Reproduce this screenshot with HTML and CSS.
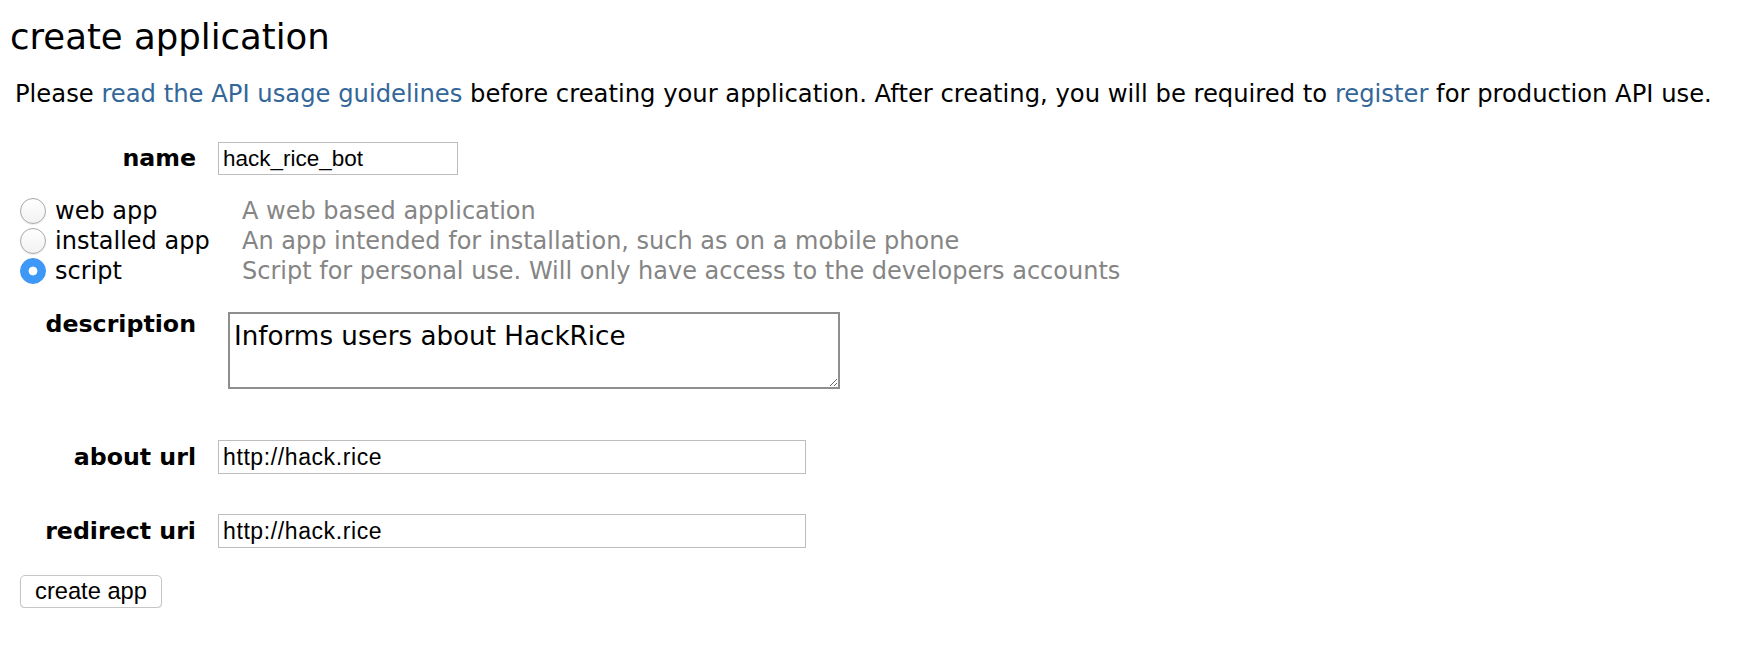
FILE: index.html
```html
<!DOCTYPE html>
<html lang="en">
<head>
<meta charset="utf-8">
<title>create application</title>
<link rel="stylesheet" href="styles.css">
</head>
<body>
<div class="page">
  <h1 class="title">create application</h1>
  <p class="intro">Please <a class="link" href="#">read the API usage guidelines</a> before creating your application. After creating, you will be required to <a class="link" href="#">register</a> for production API use.</p>

  <form class="app-form" onsubmit="return false">
    <div class="field field-name">
      <label class="field-label" for="name">name</label>
      <input class="text-input input-short" id="name" type="text" value="hack_rice_bot">
    </div>

    <div class="app-types">
      <div class="app-type">
        <label class="app-type-choice"><input class="radio" type="radio" name="type"><span>web app</span></label>
        <span class="app-type-desc">A web based application</span>
      </div>
      <div class="app-type">
        <label class="app-type-choice"><input class="radio" type="radio" name="type"><span>installed app</span></label>
        <span class="app-type-desc">An app intended for installation, such as on a mobile phone</span>
      </div>
      <div class="app-type">
        <label class="app-type-choice"><input class="radio" type="radio" name="type" checked><span>script</span></label>
        <span class="app-type-desc">Script for personal use. Will only have access to the developers accounts</span>
      </div>
    </div>

    <div class="field field-desc">
      <label class="field-label" for="desc">description</label>
      <textarea class="desc-input" id="desc">Informs users about HackRice</textarea>
    </div>

    <div class="field field-about">
      <label class="field-label" for="about">about url</label>
      <input class="text-input input-long" id="about" type="text" value="http://hack.rice">
    </div>

    <div class="field field-redirect">
      <label class="field-label" for="redirect">redirect uri</label>
      <input class="text-input input-long" id="redirect" type="text" value="http://hack.rice">
    </div>

    <button class="submit" type="button">create app</button>
  </form>
</div>
</body>
</html>
```

FILE: styles.css
```css
html, body {
  margin: 0;
  padding: 0;
  background: #ffffff;
}

body {
  font-family: "DejaVu Sans", Verdana, sans-serif;
  color: #000000;
}

.page {
  padding: 0 10px;
}

.title {
  margin: 0;
  padding-top: 17px;
  font-size: 35.5px;
  font-weight: normal;
  line-height: 40px;
}

.intro {
  margin: 23px 0 0 5px;
  font-size: 24.25px;
  line-height: 28px;
  white-space: nowrap;
}

.link {
  color: #336699;
  text-decoration: none;
}

.app-form {
  margin: 0;
}

.field {
  display: flex;
  align-items: baseline;
}

.field-label {
  width: 186px;
  margin-right: 22px;
  flex: none;
  text-align: right;
  font-size: 23.7px;
  font-weight: bold;
}

.field-name {
  margin-top: 34px;
}

.text-input {
  box-sizing: border-box;
  height: 34px;
  margin: 0;
  padding: 0 4px;
  border: 1px solid #bdbdbd;
  border-radius: 0;
  background: #ffffff;
  font-family: "Liberation Sans", Arial, sans-serif;
  font-size: 23px;
  color: #000000;
  outline: none;
}

.input-short {
  width: 240px;
  height: 33px;
  font-size: 22.5px;
}

.input-long {
  width: 588px;
  letter-spacing: 0.6px;
}

.app-types {
  margin-top: 21px;
}

.app-type {
  display: flex;
  align-items: center;
  height: 30px;
  font-size: 24px;
  line-height: 30px;
}

.app-type-choice {
  display: flex;
  align-items: center;
  width: 222px;
  margin-left: 10px;
  flex: none;
}

.radio {
  -webkit-appearance: none;
  appearance: none;
  box-sizing: border-box;
  width: 26px;
  height: 26px;
  margin: 0 9px 0 0;
  border: 1px solid #a8a8a8;
  border-radius: 50%;
  background: linear-gradient(#ffffff, #f2f2f2);
  box-shadow: 0 1px 1px rgba(0, 0, 0, 0.08);
  flex: none;
}

.radio:checked {
  border-color: #3b93ee;
  background: radial-gradient(circle, #ffffff 0, #ffffff 4px, #3d98f7 4.8px);
  box-shadow: none;
}

.app-type-desc {
  color: #858585;
  white-space: nowrap;
}

.field-desc {
  align-items: flex-start;
  margin-top: 20px;
}

.field-desc .field-label {
  margin-top: 4.5px;
  line-height: 26px;
}

.desc-input {
  box-sizing: border-box;
  width: 612px;
  height: 77px;
  margin: 6px 0 0 10px;
  padding: 7px 4px 4px;
  border: 2px solid #8e8e8e;
  border-radius: 0;
  font-family: "DejaVu Sans", Verdana, sans-serif;
  font-size: 26.2px;
  line-height: 30px;
  color: #000000;
  outline: none;
}

.field-about {
  margin-top: 51px;
}

.field-redirect {
  margin-top: 40px;
}

.submit {
  box-sizing: border-box;
  display: block;
  width: 142px;
  height: 33px;
  margin: 27px 0 0 10px;
  padding: 0;
  border: 1px solid #c6c6c6;
  border-radius: 5px;
  background: #ffffff;
  box-shadow: 0 1px 1px rgba(0, 0, 0, 0.12);
  font-family: "Liberation Sans", Arial, sans-serif;
  font-size: 23.7px;
  color: #000000;
}
```
